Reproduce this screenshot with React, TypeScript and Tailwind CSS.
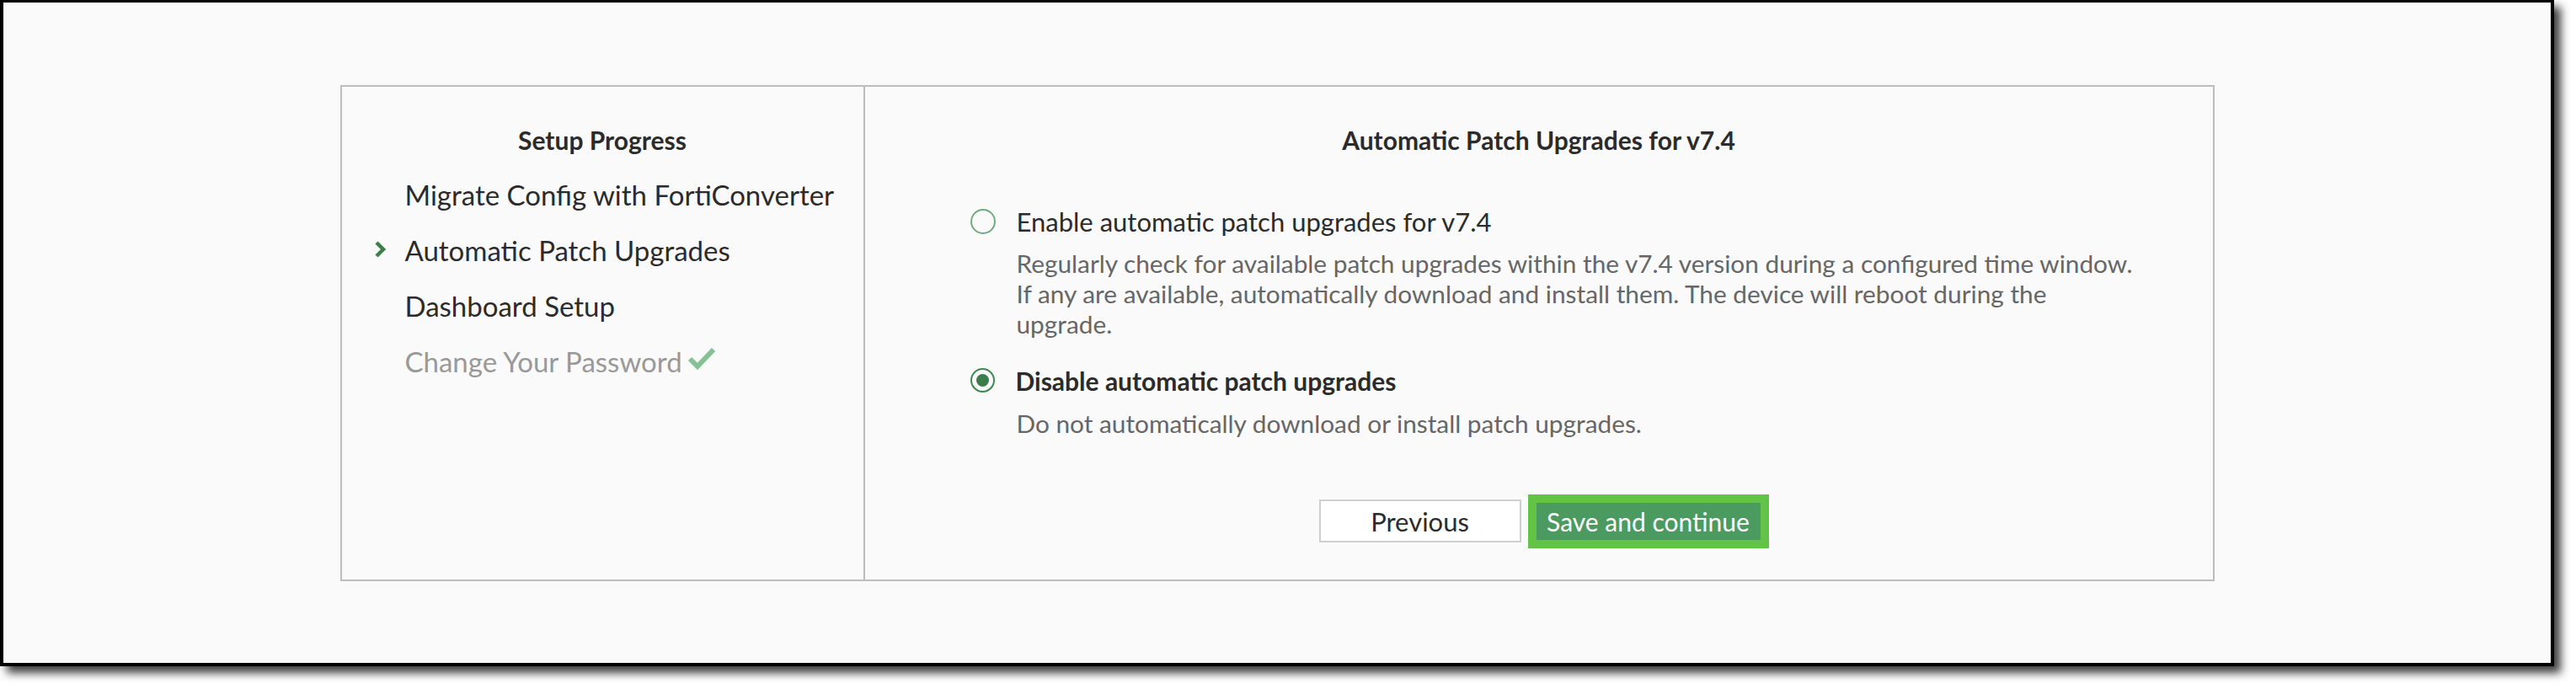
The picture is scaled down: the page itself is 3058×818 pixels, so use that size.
import React from 'react'

const font = { fontFamily: 'Lato, "Noto Sans", sans-serif' }

function Chevron() {
  return (
    <svg width="14" height="20" viewBox="0 0 14 20" className="absolute left-[-36px] top-[22px]">
      <polyline points="2,2 10,10 2,18" fill="none" stroke="#3d7f49" strokeWidth="4.5" strokeLinejoin="miter" />
    </svg>
  )
}

function CheckMark() {
  return (
    <svg width="34" height="28" viewBox="0 0 34 28" className="ml-[6px] mb-[6px]">
      <polyline points="3,14 12,23 31,3" fill="none" stroke="#84c194" strokeWidth="6" strokeLinejoin="miter" />
    </svg>
  )
}

function SetupSteps() {
  return (
    <div className="flex flex-col pt-[45px]">
      <div className="text-center text-[30px] leading-[36px] font-bold text-[#2b2b2b]">Setup Progress</div>
      <ul className="mt-[14px] pl-[75px] text-[33px] leading-[66px] text-[#2b2b2b]">
        <li>Migrate Config with FortiConverter</li>
        <li className="relative">
          <Chevron />
          Automatic Patch Upgrades
        </li>
        <li>Dashboard Setup</li>
        <li className="flex items-center text-[#999999]">
          Change Your Password
          <CheckMark />
        </li>
      </ul>
    </div>
  )
}

function Radio({ checked }: { checked?: boolean }) {
  return checked ? (
    <span className="flex h-[29px] w-[29px] shrink-0 items-center justify-center rounded-full border-[2px] border-[#3d8a50]">
      <span className="h-[15px] w-[15px] rounded-full bg-[#3c7d4b]" />
    </span>
  ) : (
    <span className="h-[30px] w-[30px] shrink-0 rounded-full border-[2px] border-[#72a97e]" />
  )
}

function PatchOptions() {
  return (
    <div className="flex flex-col pt-[45px]">
      <div className="text-center text-[30px] leading-[36px] font-bold text-[#2b2b2b]">
        Automatic Patch Upgrades for v7.4
      </div>
      <div className="mt-[61px] pl-[125px]">
        <div className="flex items-center gap-[25px]">
          <Radio />
          <span className="text-[31px] leading-[36px] text-[#2b2b2b]">Enable automatic patch upgrades for v7.4</span>
        </div>
        <p className="mt-[14px] ml-[55px] whitespace-nowrap text-[29.8px] leading-[36px] text-[#666666]">
          Regularly check for available patch upgrades within the v7.4 version during a configured time window.
          <br />
          If any are available, automatically download and install them. The device will reboot during the
          <br />
          upgrade.
        </p>
        <div className="mt-[31px] flex items-center gap-[25px]">
          <Radio checked />
          <span className="text-[30px] leading-[36px] font-bold text-[#2b2b2b]">Disable automatic patch upgrades</span>
        </div>
        <p className="mt-[15px] ml-[55px] text-[29.8px] leading-[36px] text-[#666666]">
          Do not automatically download or install patch upgrades.
        </p>
      </div>
      <div className="mt-[66px] flex items-center justify-center gap-[8px] pl-[12px]">
        <button className="h-[51px] w-[240px] border-[2px] border-[#cfcfcf] bg-white text-[31px] leading-[36px] text-[#2b2b2b]">
          Previous
        </button>
        <div className="border-[10px] border-[#62c348]">
          <button className="h-[44px] w-[266px] bg-[#4b9a5f] text-[30px] leading-[36px] text-white">
            Save and continue
          </button>
        </div>
      </div>
    </div>
  )
}

export default function App() {
  return (
    <div className="h-[818px] w-[3058px] bg-white" style={font}>
      <div className="flex h-[791px] w-[3032px] items-center justify-center border-[4px] border-t-[3px] border-black bg-[#fafafa] shadow-[8px_8px_10px_rgba(0,0,0,0.75)]">
        <div className="grid h-[589px] w-[2225px] grid-cols-[621px_1fr] border-[2px] border-[#bdbdbd]">
          <div className="border-r-[2px] border-[#bdbdbd]">
            <SetupSteps />
          </div>
          <PatchOptions />
        </div>
      </div>
    </div>
  )
}
